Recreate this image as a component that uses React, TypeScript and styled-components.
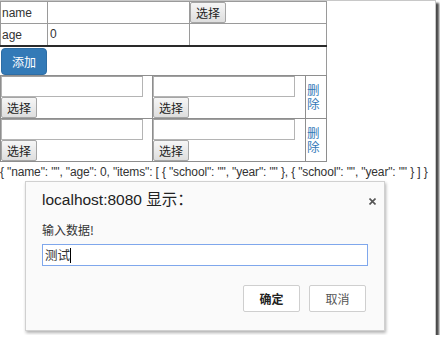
import React from "react";
import styled, { createGlobalStyle } from "styled-components";

const GlobalStyle = createGlobalStyle`
  html, body {
    margin: 0;
    padding: 0;
    background: #fff;
  }
  body {
    font-family: "Liberation Sans", "Noto Sans CJK SC", sans-serif;
    color: #333;
  }
`;

const Frame = styled.div`
  position: relative;
  width: 436px;
  height: 335px;
  box-sizing: border-box;
  border-top: 1px solid #c8c8c8;
  border-right: 1px solid #c8c8c8;
  box-shadow: 3px 3px 2px #4a4a4a;
  background: #fff;
`;

const Form = styled.div`
  width: 327px;
`;

const InfoTable = styled.table`
  width: 100%;
  border-collapse: collapse;
  table-layout: fixed;
  font-size: 12px;
  td {
    border: 1px solid #9a9a9a;
    padding: 0;
    height: 21px;
    vertical-align: middle;
  }
  tr:last-child td {
    border-bottom: 2px solid #2a2a2a;
  }
`;

const Label = styled.td`
  padding-left: 1px !important;
  color: #333;
`;

const CellInput = styled.div`
  height: 21px;
  line-height: 21px;
  padding-left: 2px;
  font-size: 12px;
  color: #333;
`;

const NativeButton = styled.button`
  display: inline-block;
  height: 21px;
  padding: 0 5px;
  margin: 0;
  box-sizing: border-box;
  border: 1px solid #a5a5a5;
  border-radius: 2px;
  background: linear-gradient(#f6f6f6, #dedede);
  font-family: "Noto Sans CJK SC", sans-serif;
  font-size: 12px;
  line-height: 18px;
  color: #222;
`;

const AddBar = styled.div`
  height: 28px;
  padding: 1px 0 0 1px;
  box-sizing: border-box;
  border-right: 1px solid #9a9a9a;
`;

const PrimaryButton = styled.button`
  height: 27px;
  padding: 0 10px;
  border: 1px solid #2e6da4;
  border-radius: 4px;
  background: #337ab7;
  color: #fff;
  font-family: "Noto Sans CJK SC", sans-serif;
  font-size: 12px;
`;

const ItemsTable = styled.table`
  width: 100%;
  border-collapse: collapse;
  table-layout: fixed;
  td {
    border: 1px solid #8e8e8e;
    padding: 0;
    height: 42px;
    vertical-align: top;
  }
`;

const ItemCell = styled.div`
  display: flex;
  flex-direction: column;
  align-items: flex-start;
`;

const TextInput = styled.div`
  width: 142px;
  height: 21px;
  box-sizing: border-box;
  border: 1px solid #b4b4b4;
  border-top-color: #a0a0a0;
  background: #fff;
`;

const DeleteCell = styled.td`
  vertical-align: middle !important;
  color: #337ab7;
  font-family: "Noto Sans CJK SC", sans-serif;
  font-size: 12.5px;
  line-height: 14px;
  padding-left: 1px !important;
`;

const Json = styled.div`
  margin-top: 2px;
  font-size: 12px;
  letter-spacing: -0.14px;
  line-height: 16px;
  color: #333;
  white-space: nowrap;
`;

const Dialog = styled.div`
  position: absolute;
  left: 25px;
  top: 180px;
  width: 360px;
  height: 150px;
  box-sizing: border-box;
  border: 1px solid #d0d0d0;
  background: #fafafa;
  box-shadow: 1px 2px 3px rgba(0, 0, 0, 0.3);
  padding: 9px 17px 0 16px;
`;

const Title = styled.div`
  font-size: 15.5px;
  line-height: 18px;
  color: #222;
`;

const Close = styled.div`
  position: absolute;
  right: 8px;
  top: 9px;
  width: 7px;
  height: 7px;
`;

const Message = styled.div`
  margin-top: 13px;
  font-family: "Noto Sans CJK SC", sans-serif;
  font-size: 12px;
  line-height: 16px;
  color: #333;
`;

const PromptInput = styled.div`
  margin-top: 6px;
  width: 326px;
  height: 22px;
  box-sizing: border-box;
  border: 1px solid #7fa7ec;
  background: #fff;
  padding-left: 2px;
  font-family: "Noto Sans CJK SC", sans-serif;
  font-size: 12.5px;
  line-height: 20px;
  color: #333;
  display: flex;
  align-items: center;
`;

const Caret = styled.span`
  display: inline-block;
  width: 1px;
  height: 15px;
  background: #000;
`;

const ButtonRow = styled.div`
  display: flex;
  justify-content: flex-end;
  gap: 9px;
  margin-top: 19px;
  padding-right: 1px;
`;

const DialogButton = styled.button<{ $primary?: boolean }>`
  width: 57px;
  height: 27px;
  border: 1px solid #cfcfcf;
  border-radius: 2px;
  background: #fff;
  font-family: "Noto Sans CJK SC", sans-serif;
  font-size: 12px;
  font-weight: ${(p) => (p.$primary ? 700 : 400)};
  color: ${(p) => (p.$primary ? "#222" : "#555")};
`;

const items = [
  { school: "", year: "" },
  { school: "", year: "" },
];

function App() {
  const model = { name: "", age: 0, items };
  const json =
    '{ "name": "' +
    model.name +
    '", "age": ' +
    model.age +
    ', "items": [ ' +
    model.items
      .map((i) => '{ "school": "' + i.school + '", "year": "' + i.year + '" }')
      .join(", ") +
    " ] }";
  return (
    <>
      <GlobalStyle />
      <Frame>
        <Form>
          <InfoTable>
            <colgroup>
              <col style={{ width: 47 }} />
              <col style={{ width: 142 }} />
              <col />
            </colgroup>
            <tbody>
              <tr>
                <Label>name</Label>
                <td>
                  <CellInput />
                </td>
                <td>
                  <NativeButton>选择</NativeButton>
                </td>
              </tr>
              <tr>
                <Label>age</Label>
                <td>
                  <CellInput>0</CellInput>
                </td>
                <td />
              </tr>
            </tbody>
          </InfoTable>
          <AddBar>
            <PrimaryButton>添加</PrimaryButton>
          </AddBar>
          <ItemsTable>
            <colgroup>
              <col style={{ width: 152 }} />
              <col style={{ width: 153 }} />
              <col />
            </colgroup>
            <tbody>
              {model.items.map((item, idx) => (
                <tr key={idx}>
                  <td>
                    <ItemCell>
                      <TextInput />
                      <NativeButton>选择</NativeButton>
                    </ItemCell>
                  </td>
                  <td>
                    <ItemCell>
                      <TextInput />
                      <NativeButton>选择</NativeButton>
                    </ItemCell>
                  </td>
                  <DeleteCell>删除</DeleteCell>
                </tr>
              ))}
            </tbody>
          </ItemsTable>
        </Form>
        <Json>{json}</Json>
        <Dialog>
          <Title>localhost:8080 显示：</Title>
          <Close>
            <svg width="7" height="7" viewBox="0 0 7 7">
              <path d="M0.5 0.5L6.5 6.5M6.5 0.5L0.5 6.5" stroke="#555" strokeWidth="1.6" />
            </svg>
          </Close>
          <Message>输入数据!</Message>
          <PromptInput>
            测试
            <Caret />
          </PromptInput>
          <ButtonRow>
            <DialogButton $primary>确定</DialogButton>
            <DialogButton>取消</DialogButton>
          </ButtonRow>
        </Dialog>
      </Frame>
    </>
  );
}

export default App;
